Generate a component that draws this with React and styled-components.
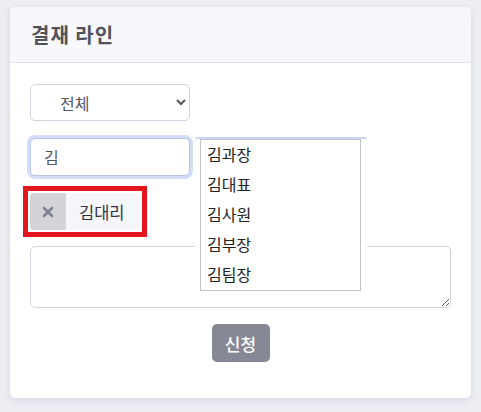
import React, { useEffect, useRef } from 'react';
import styled, { createGlobalStyle } from 'styled-components';

const GlobalStyle = createGlobalStyle`
  body {
    margin: 0;
    background: #eceef3;
    font-family: "Noto Sans CJK KR", "Noto Sans", sans-serif;
  }
`;

const suggestions = ['김과장', '김대표', '김사원', '김부장', '김팀장'];

const App = () => {
  const inputRef = useRef(null);

  useEffect(() => {
    const el = inputRef.current;
    if (el) {
      el.focus();
      el.setSelectionRange(el.value.length, el.value.length);
    }
  }, []);

  return (
    <Page>
      <GlobalStyle />
      <Card>
        <Header>
          <Title>결재 라인</Title>
        </Header>
        <Body>
          <Select defaultValue="all">
            <option value="all">전체</option>
          </Select>
          <SearchRow>
            <SearchInput ref={inputRef} defaultValue="김" />
            <Backdrop />
            <Suggest>
              {suggestions.map(name => <SuggestItem key={name}>{name}</SuggestItem>)}
            </Suggest>
          </SearchRow>
          <ChipRow>
            <Highlight>
              <Chip>
                <ChipRemove>
                  <svg width="12" height="12" viewBox="0 0 12 12">
                    <path d="M2 2 L10 10 M10 2 L2 10" stroke="#7f8192" strokeWidth="2.6" strokeLinecap="round" />
                  </svg>
                </ChipRemove>
                <ChipLabel>김대리</ChipLabel>
              </Chip>
            </Highlight>
          </ChipRow>
          <Memo />
          <Actions>
            <SubmitButton>신청</SubmitButton>
          </Actions>
        </Body>
      </Card>
    </Page>
  );
};

const Page = styled.div`
  padding: 7px 10px 14px;
`;

const Card = styled.div`
  background: #fff;
  border-radius: 5px;
  box-shadow: 0 2px 6px rgba(150, 155, 180, 0.25);
  overflow: hidden;
`;

const Header = styled.div`
  height: 55px;
  display: flex;
  align-items: center;
  padding: 0 21px;
  background: #f7f8fc;
  border-bottom: 1px solid #dfe0ee;
`;

const Title = styled.h2`
  margin: 0;
  font-size: 20px;
  font-weight: 700;
  color: #52525c;
  letter-spacing: 1px;
`;

const Body = styled.div`
  padding: 21px 20px 36px;
  display: flex;
  flex-direction: column;
`;

const Select = styled.select`
  width: 160px;
  height: 37px;
  padding: 0 6px 0 25px;
  border: 1px solid #d3d3e3;
  border-radius: 5px;
  background: #fff;
  font-family: inherit;
  font-size: 16px;
  color: #555560;
`;

const SearchRow = styled.div`
  position: relative;
  margin-top: 17px;
  height: 38px;
`;

const SearchInput = styled.input`
  box-sizing: border-box;
  width: 160px;
  height: 38px;
  padding: 0 13px;
  border: 1px solid #b8c4ef;
  border-radius: 5px;
  box-shadow: 0 0 0 3px #d4dcf8;
  outline: none;
  font-family: inherit;
  font-size: 16px;
  color: #555560;
  caret-color: #333;
`;

const Backdrop = styled.div`
  position: absolute;
  left: 165px;
  top: -1px;
  width: 172px;
  height: 153px;
  background: #fff;
  border-top: 2px solid #c9d3f6;
  border-radius: 3px 3px 0 0;
`;

const Suggest = styled.ul`
  position: absolute;
  left: 170px;
  top: 1px;
  z-index: 2;
  box-sizing: border-box;
  width: 161px;
  height: 152px;
  margin: 0;
  padding: 0;
  list-style: none;
  background: #fff;
  border: 1px solid #c3c3c8;
`;

const SuggestItem = styled.li`
  height: 30px;
  line-height: 29px;
  padding-left: 6px;
  font-size: 16px;
  color: #222;
`;

const ChipRow = styled.div`
  margin-top: 10px;
  display: flex;
`;

const Highlight = styled.div`
  margin-left: -7px;
  padding: 2px;
  border: 5px solid #e3151d;
`;

const Chip = styled.div`
  display: flex;
  align-items: stretch;
  width: 110px;
  height: 37px;
  border-radius: 4px;
  background: #f5f6fb;
  overflow: hidden;
`;

const ChipRemove = styled.span`
  width: 36px;
  display: flex;
  align-items: center;
  justify-content: center;
  background: #d4d4d8;
`;

const ChipLabel = styled.span`
  display: flex;
  align-items: center;
  padding-left: 13px;
  font-size: 16.5px;
  color: #333340;
`;

const Memo = styled.textarea`
  box-sizing: border-box;
  margin-top: 9px;
  width: 100%;
  height: 62px;
  border: 1px solid #d3d3e3;
  border-radius: 5px;
  font-family: inherit;
`;

const Actions = styled.div`
  margin-top: 16px;
  display: flex;
  justify-content: center;
`;

const SubmitButton = styled.button`
  width: 58px;
  height: 38px;
  border: none;
  border-radius: 5px;
  background: #878896;
  color: #fff;
  font-family: inherit;
  font-size: 17px;
  font-weight: 500;
`;

export default App;
